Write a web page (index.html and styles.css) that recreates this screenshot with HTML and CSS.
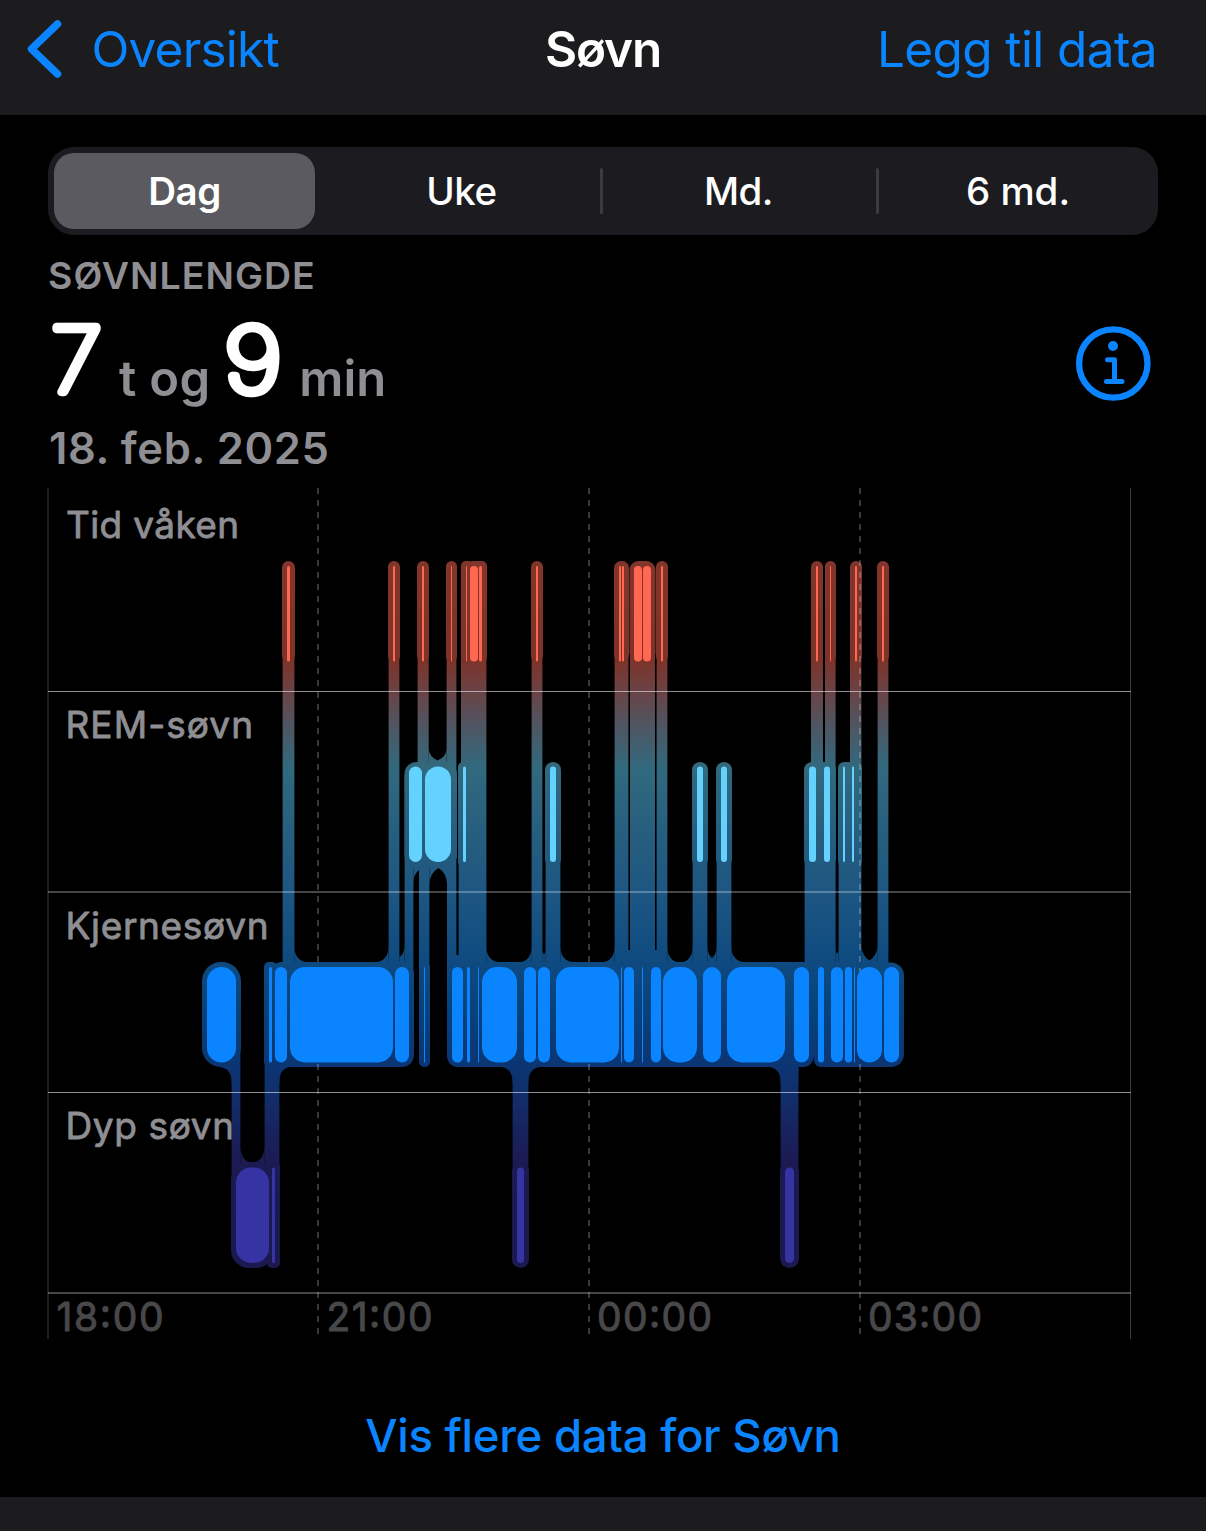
FILE: index.html
```html
<!DOCTYPE html>
<html lang="nb">
<head>
  <meta charset="UTF-8">
  <meta name="viewport" content="width=device-width, initial-scale=1.0">
  <title>Søvn</title>
  <link rel="stylesheet" href="styles.css">
</head>
<body>
  <header class="navbar">
    <a class="back" href="#">
      <svg class="chevron" width="40" height="64" viewBox="0 0 40 64">
        <path d="M33.5 7 L7.5 32 L33.5 57" />
      </svg>
      <span>Oversikt</span>
    </a>
    <h1 class="title">Søvn</h1>
    <a class="add" href="#">Legg til data</a>
  </header>

  <main class="content">
    <div class="segments">
      <button class="segment selected">Dag</button>
      <button class="segment">Uke</button>
      <button class="segment divided">Md.</button>
      <button class="segment divided last">6 md.</button>
    </div>

    <section class="summary">
      <div class="summary-text">
        <div class="caption">SØVNLENGDE</div>
        <div class="duration">
          <svg class="number" width="56" height="84" viewBox="0 0 56 84"><text x="3" y="80.3" textLength="51" lengthAdjust="spacingAndGlyphs">7</text></svg>
          <span class="unit hours">t og</span>
          <svg class="number" width="62" height="84" viewBox="0 0 62 84"><text x="2" y="80.3" textLength="58" lengthAdjust="spacingAndGlyphs">9</text></svg>
          <span class="unit minutes">min</span>
        </div>
        <div class="date">18. feb. 2025</div>
      </div>
      <svg class="info" width="76" height="76" viewBox="0 0 76 76">
        <circle class="ring" cx="38.3" cy="37.5" r="34.2" />
        <circle class="dot" cx="38" cy="20" r="5" />
        <path d="M32.5 33.7 H39.5 V55.5 M31.5 55.5 H47" />
      </svg>
    </section>

    <svg class="chart" width="1086" height="852" viewBox="47 488 1086 852">
      <defs>
        <linearGradient id="stages" gradientUnits="userSpaceOnUse" x1="0" y1="561" x2="0" y2="1268">
          <stop offset="0" stop-color="#82352a" />
          <stop offset="0.14" stop-color="#7c3329" />
          <stop offset="0.184" stop-color="#6a4345" />
          <stop offset="0.229" stop-color="#515460" />
          <stop offset="0.293" stop-color="#31697e" />
          <stop offset="0.42" stop-color="#235a7f" />
          <stop offset="0.47" stop-color="#1d5682" />
          <stop offset="0.57" stop-color="#0e4a80" />
          <stop offset="0.64" stop-color="#06417b" />
          <stop offset="0.71" stop-color="#0b3673" />
          <stop offset="0.76" stop-color="#122d69" />
          <stop offset="0.85" stop-color="#1c1a52" />
          <stop offset="1" stop-color="#1c1850" />
        </linearGradient>
      </defs>

      <g class="stage-label">
        <text x="66" y="538" textLength="173">Tid våken</text>
        <text x="65.5" y="738" textLength="187.5">REM-søvn</text>
        <text x="65.5" y="939" textLength="203">Kjernesøvn</text>
        <text x="65.5" y="1139" textLength="168.5">Dyp søvn</text>
      </g>

      <g id="links" fill="url(#stages)"></g>

      <g class="grid-lines">
        <path class="edge" d="M48 488 V1339 M1130.5 488 V1339" />
        <path class="dash" d="M318 488 V1339 M589 488 V1339 M860 488 V1339" />
        <path class="row" d="M48 691.5 H1131 M48 892 H1131 M48 1092.5 H1131 M48 1293 H1131" />
      </g>

      <g id="awake" fill="#ff6750"></g>
      <g id="rem" fill="#64d2ff"></g>
      <g id="core" fill="#0a84ff"></g>
      <g id="deep" fill="#3634a3"></g>

      <g class="time-label">
        <text x="56.5" y="1330.5" textLength="107">18:00</text>
        <text x="326.5" y="1330.5" textLength="106">21:00</text>
        <text x="597" y="1330.5" textLength="115">00:00</text>
        <text x="868" y="1330.5" textLength="114">03:00</text>
      </g>
    </svg>

    <a class="more" href="#">Vis flere data for Søvn</a>
  </main>

  <footer class="tabbar"></footer>

  <script src="chart.js"></script>
</body>
</html>
```

FILE: styles.css
```css
* {
  box-sizing: border-box;
}

body {
  margin: 0;
  width: 1206px;
  height: 1531px;
  display: flex;
  flex-direction: column;
  overflow: hidden;
  background-color: #000;
  color: #fff;
  font-family: Inter, "Liberation Sans", sans-serif;
}

a {
  color: #0a84ff;
  text-decoration: none;
}

.navbar {
  display: grid;
  grid-template-columns: 1fr auto 1fr;
  align-items: center;
  height: 115px;
  padding-bottom: 17px;
  background-color: #1c1c1e;
  font-size: 49.5px;
  line-height: 60px;
}

.back {
  display: flex;
  align-items: center;
  gap: 27.5px;
  padding-left: 24px;
  letter-spacing: -0.8px;
}

.chevron path {
  fill: none;
  stroke: #0a84ff;
  stroke-width: 7.5;
  stroke-linecap: round;
  stroke-linejoin: round;
}

.title {
  margin: 0;
  font-size: 49.5px;
  font-weight: 600;
  letter-spacing: -1.2px;
}

.add {
  padding-right: 49px;
  text-align: right;
  letter-spacing: -0.6px;
}

.content {
  flex: 1;
  display: flex;
  flex-direction: column;
  padding: 32px 48px 0;
}

.segments {
  display: grid;
  grid-template-columns: 269px 277px 277px 1fr;
  height: 88px;
  padding: 6px;
  border-radius: 26px;
  background-color: #1c1c20;
}

.segment {
  position: relative;
  padding: 0;
  border: 0;
  border-radius: 20px;
  background: none;
  color: #fff;
  font: 500 38.5px/76px Inter, "Liberation Sans", sans-serif;
  letter-spacing: -0.5px;
}

.segment.selected {
  width: 261px;
  background-color: #5b5a60;
  font-weight: 600;
}

.segment.last {
  padding-left: 7px;
  letter-spacing: 0;
}

.segment.divided::before {
  content: "";
  position: absolute;
  left: 0;
  top: 15px;
  width: 3px;
  height: 46px;
  border-radius: 2px;
  background-color: #3c3c40;
}

.segment.last::before {
  left: -1px;
}

.summary {
  display: flex;
  justify-content: space-between;
  height: 253px;
  padding: 18px 7px 0 0;
}

.caption {
  color: #8e8e93;
  font-size: 37.5px;
  font-weight: 600;
  line-height: 46px;
  letter-spacing: 1px;
}

.duration {
  display: flex;
  align-items: baseline;
  height: 110px;
  padding-top: 13px;
}

.number {
  overflow: visible;
}

/* thin glyph with a thick round stroke gives rounded digits */
.number text {
  fill: #fff;
  stroke: #fff;
  stroke-width: 8.5;
  stroke-linejoin: round;
  font-size: 89px;
  font-weight: 100;
}

.unit {
  color: #8e8e93;
  font-size: 49px;
  font-weight: 600;
}

.hours {
  margin: 0 12px 0 15px;
  letter-spacing: 0.3px;
}

.minutes {
  margin-left: 15px;
}

.date {
  margin-top: 13px;
  padding-left: 1px;
  color: #8e8e93;
  font-size: 43.5px;
  font-weight: 600;
  line-height: 52px;
  letter-spacing: 0.65px;
}

.info {
  margin-top: 73px;
}

.info circle,
.info path {
  fill: none;
  stroke: #0a84ff;
}

.info .ring {
  stroke-width: 6.3;
}

.info .dot {
  fill: #0a84ff;
  stroke: none;
}

.info path {
  stroke-width: 5;
  stroke-linecap: round;
  stroke-linejoin: round;
}

.chart {
  flex: none;
  margin-left: -1px;
}

.stage-label {
  fill: #8e8e93;
  stroke: #8e8e93;
  stroke-width: 0.8;
  stroke-linejoin: round;
  font-size: 37px;
  font-weight: 400;
}

.time-label {
  fill: #48484a;
  stroke: #48484a;
  stroke-width: 1;
  stroke-linejoin: round;
  font-size: 39px;
  font-weight: 400;
}

.grid-lines path {
  fill: none;
}

.grid-lines .edge {
  stroke: rgba(235, 235, 245, 0.25);
}

.grid-lines .dash {
  stroke: rgba(235, 235, 245, 0.24);
  stroke-width: 2;
  stroke-dasharray: 6 6;
}

.grid-lines .row {
  stroke: rgba(235, 235, 245, 0.6);
}

.more {
  margin-top: 68px;
  text-align: center;
  font-size: 45.5px;
  font-weight: 500;
  line-height: 56px;
  letter-spacing: -0.28px;
}

.tabbar {
  height: 34px;
  background-color: #1c1c1e;
}
```

FILE: chart.js
```js
const SVG_NS = 'http://www.w3.org/2000/svg';

// [left, right] of each recorded interval
const stages = {
  awake: {
    top: 566,
    bars: [
      [287, 290], [393, 395], [422, 424], [451, 452], [466, 467], [470, 478],
      [479, 482], [536, 538], [619, 621], [622, 624], [634, 642], [643, 651],
      [661, 663], [816, 818], [830, 831], [855, 857], [882, 884]
    ]
  },
  rem: {
    top: 766.5,
    bars: [
      [409, 422], [425, 451], [463, 466], [550, 556], [697, 703], [721, 727],
      [809, 816], [824, 830], [843, 845], [852, 854]
    ]
  },
  core: {
    top: 967,
    bars: [
      [207, 236], [269, 272], [275, 287], [290, 393], [395, 409], [424, 425],
      [452, 463], [467, 470], [478, 479], [482, 517], [524, 536], [538, 550],
      [556, 619], [621, 622], [624, 634], [642, 643], [651, 661], [663, 697],
      [703, 721], [727, 785], [794, 809], [818, 824], [831, 843], [845, 852],
      [854, 855], [857, 882], [884, 899]
    ]
  },
  deep: {
    top: 1167.5,
    bars: [[236, 269], [272, 275], [517, 524], [785, 794]]
  }
};

// rounded halos around groups of bars: left, right, top, bottom, radius
const halos = [
  [282, 295, 561, 662, 6.5], [388, 400, 561, 662, 6], [417, 429, 561, 662, 6],
  [446, 457, 561, 662, 5.5], [461, 473, 561, 662, 5], [465, 483, 561, 662, 8],
  [474, 487, 561, 662, 5], [531, 543, 561, 662, 6], [614, 629, 561, 662, 7],
  [629.5, 655.5, 561, 662, 9], [656, 668, 561, 662, 6], [811, 823, 561, 662, 6],
  [825, 836, 561, 662, 5.5], [850, 862, 561, 662, 6], [877, 889, 561, 662, 6],

  [404.5, 457, 762, 867, 12], [458, 475, 762, 867, 5], [545, 561, 762, 867, 8],
  [692, 708, 762, 867, 8], [716, 732, 762, 867, 8], [804, 836, 762, 867, 8],
  [838, 862, 762, 867, 6],

  [202, 241, 962, 1067, 19], [264, 277, 962, 1067, 5], [270, 414, 962, 1067, 12],
  [419, 430, 962, 1067, 5.5], [447, 814, 962, 1067, 11],
  [814, 840, 962, 1067, 7], [820, 904, 962.5, 1067, 13],

  [231, 274, 1162, 1268, 18], [267, 280, 1162, 1268, 5],
  [512, 529, 1162, 1268, 8.5], [780, 799, 1162, 1268, 9.5]
];

// straight connectors between two levels: left, right, top, bottom
const columns = [
  [282.6, 294.4, 655, 970], [388.6, 399.4, 655, 970], [417.6, 428.7, 655, 780],
  [446.6, 456.4, 655, 780], [461, 486.4, 655, 970], [531.6, 542.4, 655, 970],
  [614.6, 628.4, 655, 970], [630, 655, 655, 970], [656.6, 667.4, 655, 970],
  [811, 823, 655, 780], [825, 835.6, 655, 780], [850, 861.4, 655, 780],
  [877.6, 888.4, 655, 970],

  [404.6, 413.4, 775, 1000], [419, 429.4, 860, 1020], [447, 456.4, 775, 1000],
  [458.6, 475, 775, 970], [545.6, 560.4, 775, 970], [692.6, 707.4, 775, 970],
  [716.6, 731.4, 775, 970], [804.6, 835.6, 775, 970], [838.6, 861.4, 775, 970],

  [231.6, 240.4, 1020, 1185], [264.6, 279.4, 980, 1175],
  [512.6, 528.4, 1050, 1175], [780.6, 798.4, 1050, 1175]
];

// concave corners where connectors meet the halos
const fillets = [
  'M294.4 947 Q295 962 309 962.2 H374 Q388 962 388.6 947 V966 H294.4Z',
  'M399.4 957 Q404.6 954 404.6 945 V966 H399.4Z',
  'M456 955 L459 955 V966 H456Z',
  'M486.4 947 Q487 962 501 962.2 H518 Q531 962 531.6 947 V966 H486.4Z',
  'M542.4 950 Q543 954 544 954 Q545.6 954 545.6 948 V966 H542.4Z',
  'M560.4 947 Q561 962 575 962.2 H601 Q614 962 614.6 947 V966 H560.4Z',
  'M628 950 H630.5 V966 H628Z',
  'M655 950 H657 V966 H655Z',
  'M667.4 947 Q668 962 680 962.2 Q692 962 692.6 947 V966 H667.4Z',
  'M707.4 947 Q708 955 712 958 Q716 955 716.6 947 V966 H707.4Z',
  'M731.4 947 Q732 962 746 962.2 V966 H731.4Z',
  'M835.6 948 Q836 953 837 953.5 Q838.6 953 838.6 948 V966 H835.6Z',
  'M861.4 947 Q863 957 869.5 960.5 Q876 957 877.6 947 V966 H861.4Z',
  'M428.7 749 Q429.5 757 437.5 760.5 Q446 757 446.6 749 V768 H428.7Z',
  'M413.4 884 Q413.4 874 419 870 V860 H413.4Z',
  'M429.4 884 Q430 873 438.5 868 Q446.5 873 447 884 V860 H429.4Z',
  'M240.4 1148 Q242 1162 252 1162.5 Q263 1162 264.6 1148 V1175 H240.4Z',
  'M218 1067 Q231.6 1067.5 231.6 1082 L236 1082 V1060Z',
  'M293 1066.8 Q279.4 1067 279.4 1082 L275 1082 V1060 H293Z',
  'M498 1066.8 Q512.6 1067 512.6 1082 H528.4 Q528.4 1067 543 1066.8 V1060 H498Z',
  'M766 1066.8 Q780.6 1067 780.6 1082 H798.4 V1060 H766Z'
];

function add(parent, name, attrs) {
  const el = document.createElementNS(SVG_NS, name);
  for (const key in attrs) {
    el.setAttribute(key, attrs[key]);
  }
  parent.appendChild(el);
}

function addRect(parent, left, right, top, bottom, radius) {
  add(parent, 'rect', {
    x: left,
    y: top,
    width: right - left,
    height: bottom - top,
    rx: radius
  });
}

const links = document.getElementById('links');
halos.forEach(halo => addRect(links, ...halo));
columns.forEach(column => addRect(links, ...column, 0));
fillets.forEach(d => add(links, 'path', { d }));

for (const name in stages) {
  const group = document.getElementById(name);
  const { top, bars } = stages[name];
  bars.forEach(([left, right]) => {
    addRect(group, left, right, top, top + 95.5, Math.min((right - left) / 2, 15));
  });
}
```
